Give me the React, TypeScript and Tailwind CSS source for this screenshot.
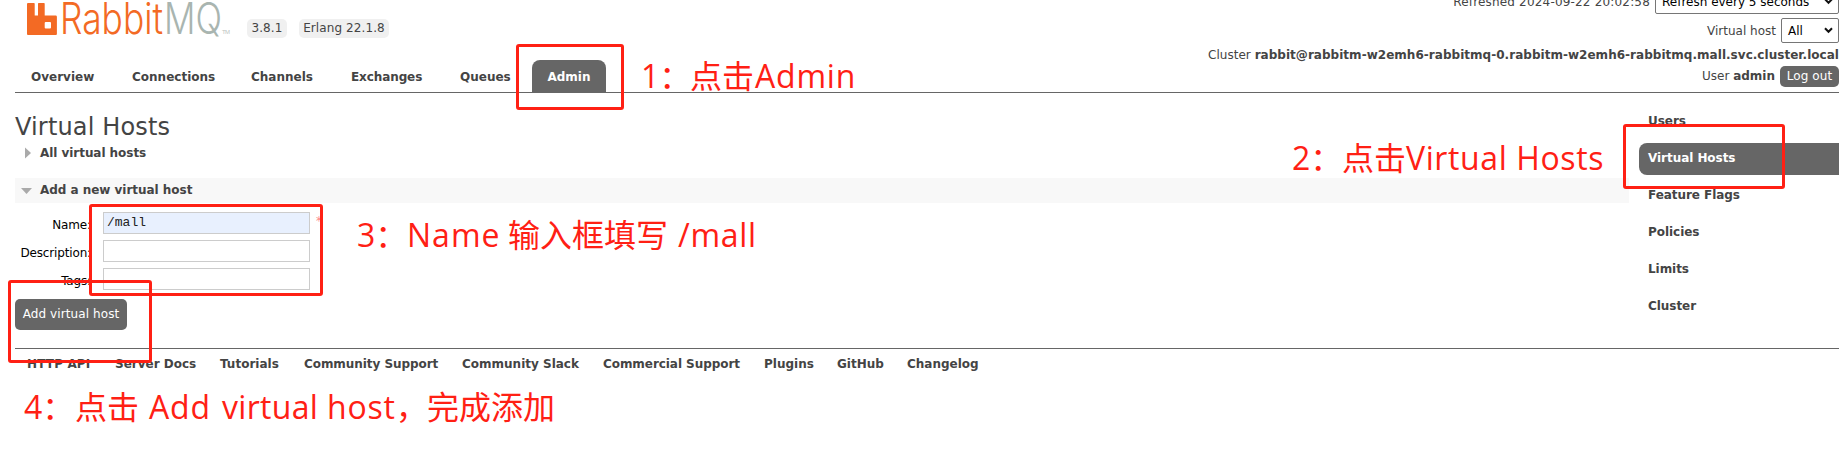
import React from "react";

const tabs = [
  { label: "Overview", cls: "w-[101px]" },
  { label: "Connections", cls: "w-[119px]" },
  { label: "Channels", cls: "w-[100px]" },
  { label: "Exchanges", cls: "w-[109px] tracking-[-0.1px]" },
  { label: "Queues", cls: "w-[72px]" },
];

const links = [
  { label: "HTTP API", cls: "w-[88px] tracking-[0.15px]" },
  { label: "Server Docs", cls: "w-[105px]" },
  { label: "Tutorials", cls: "w-[84px]" },
  { label: "Community Support", cls: "w-[158px] tracking-[-0.06px]" },
  { label: "Community Slack", cls: "w-[141px]" },
  { label: "Commercial Support", cls: "w-[161px] tracking-[-0.06px]" },
  { label: "Plugins", cls: "w-[73px]" },
  { label: "GitHub", cls: "w-[70px]" },
  { label: "Changelog", cls: "w-[90px]" },
];

const sections = ["Users", "Virtual Hosts", "Feature Flags", "Policies", "Limits", "Cluster"];

const Logo = () => (
  <svg width="210" height="40" viewBox="0 0 210 40" className="block overflow-visible">
    <path
      fill="#f36a24"
      d="M1 3h6q.7 0 .7.700v11.800h3.300V3.700q0-.7.700-.700h5.300q.7 0 .7.700v11.800h11q1.200 0 1.200 1.200V34q0 1-1 1H1q-1 0-1-1V4q0-1 1-1zM18.700 22q-1 0-1 1v4.500q0 1 1 1H23q1 0 1-1V23q0-1-1-1z"
    />
    <text x="33" y="34" fontSize="43" fontWeight="300" fill="#f36a24" textLength="103" lengthAdjust="spacingAndGlyphs" className="font-['Inter']">
      Rabbit
    </text>
    <text x="137" y="34" fontSize="43" fontWeight="300" fill="#a9b5b0" textLength="58" lengthAdjust="spacingAndGlyphs" className="font-['Inter']">
      MQ
    </text>
    <text x="195" y="34" fontSize="6" fill="#bcc4c1" textLength="8" className="font-['Liberation_Sans']">
      TM
    </text>
  </svg>
);

const Chevron = () => (
  <svg width="9" height="7" viewBox="0 0 9 7" className="shrink-0">
    <path d="M1 1.200l3.500 3.600L8 1.200" fill="none" stroke="#111" strokeWidth="2" />
  </svg>
);

const Field = ({ label, value = "" }: { label: string; value?: string }) => (
  <div className="flex h-[28px] items-start">
    <label className="mt-[3px] w-[76px] text-right leading-[20px] tracking-[-0.15px] text-black">{label}</label>
    <div
      className={
        "ml-[12px] h-[22px] w-[207px] border border-[#ccc] pl-[3px] font-['Liberation_Mono'] text-[13px] leading-[20px] text-[#222] " +
        (value ? "bg-[#e8f0fe]" : "bg-white")
      }
    >
      {value}
    </div>
    {value && <span className="ml-[6px] mt-[1px] leading-[16px] text-[#f88]">*</span>}
  </div>
);

const Frame = ({ cls }: { cls: string }) => (
  <div className={"absolute rounded-[3px] border-[3px] border-[#ff2014] " + cls} />
);

const note =
  "absolute flex whitespace-pre font-['Open_Sans','Noto_Sans_CJK_SC',sans-serif] text-[32px] leading-[40px] text-[#ff2014]";

export default function App() {
  return (
    <div className="relative h-[473px] w-[1848px] overflow-hidden bg-white pl-[15px] pr-[9px] font-['DejaVu_Sans',sans-serif] text-[12px] text-[#444]">
      <header className="flex h-[93px] justify-between border-b border-[#666]">
        <div>
          <div className="flex h-[60px] pl-[12px]">
            <Logo />
            <div className="ml-[10px] mt-[19px] h-[19px] w-[40px] rounded-[5px] bg-[#f0f0f0] text-center leading-[19px] tracking-[0.1px]">3.8.1</div>
            <div className="ml-[12px] mt-[19px] h-[19px] w-[90px] whitespace-nowrap rounded-[5px] bg-[#f0f0f0] text-center leading-[19px] tracking-[0.1px]">Erlang 22.1.8</div>
          </div>
          <nav className="flex h-[32px] pl-[16px] font-bold leading-[34px]">
            {tabs.map((t) => (
              <a key={t.label} className={"shrink-0 whitespace-nowrap " + t.cls}>{t.label}</a>
            ))}
            <a className="h-[32px] w-[74px] rounded-t-[8px] bg-[#666] text-center text-white">Admin</a>
          </nav>
        </div>
        <div className="flex flex-col items-end whitespace-nowrap">
          <div className="-mt-[11px] flex h-[25px] items-center gap-[5px]">
            <span className="tracking-[0.18px]">Refreshed 2024-09-22 20:02:58</span>
            <div className="flex h-[25px] w-[184px] items-center justify-between rounded-[2px] border border-[#767676] pl-[6px] pr-[5px] text-black">
              <span>Refresh every 5 seconds</span>
              <Chevron />
            </div>
          </div>
          <div className="mt-[4px] flex h-[25px] items-center gap-[5px]">
            <span>Virtual host</span>
            <div className="flex h-[25px] w-[58px] items-center justify-between rounded-[2px] border border-[#767676] pl-[6px] pr-[5px] text-black">
              <span>All</span>
              <Chevron />
            </div>
          </div>
          <div className="mt-[2px] h-[20px] leading-[20px] tracking-[0.03px]">
            Cluster <b>rabbit@rabbitm-w2emh6-rabbitmq-0.rabbitm-w2emh6-rabbitmq.mall.svc.cluster.local</b>
          </div>
          <div className="mt-px flex h-[21px] leading-[21px]">
            <span className="mr-[5px]">
              User <b>admin</b>
            </span>
            <button className="h-[21px] w-[59px] rounded-[5px] bg-[#666] text-white tracking-[0.1px]">Log out</button>
          </div>
        </div>
      </header>

      <div className="flex h-[255px] justify-between">
        <main className="w-[1614px]">
          <h1 className="mt-[17px] h-[33px] text-[24px] leading-[35px] tracking-[0.15px]">Virtual Hosts</h1>
          <h2 className="flex h-[20px] items-center pl-[10px] font-bold leading-[20px] tracking-[-0.05px]">
            <svg width="6" height="12" className="mr-[9px]"><path d="M0 .5L6 6L0 11.500z" fill="#aaa" /></svg>
            All virtual hosts
          </h2>
          <h2 className="mt-[15px] flex h-[25px] items-center bg-[#f8f8f8] pl-[6px] font-bold leading-[25px] tracking-[-0.03px]">
            <svg width="11" height="6" className="mr-[8px]"><path d="M0 0H11L5.500 6z" fill="#aaa" /></svg>
            Add a new virtual host
          </h2>
          <form className="mt-[9px]">
            <Field label="Name:" value="/mall" />
            <Field label="Description:" />
            <Field label="Tags:" />
            <button type="button" className="mt-[3px] block h-[31px] w-[112px] whitespace-nowrap rounded-[5px] bg-[#666] pb-[2px] text-white tracking-[0.1px]">Add virtual host</button>
          </form>
        </main>
        <aside className="w-[200px] pt-[13px] font-bold">
          {sections.map((s) => (
            <a
              key={s}
              className={
                "mb-[5px] block h-[32px] rounded-l-[8px] pl-[9px] leading-[31px] tracking-[-0.05px] " +
                (s === "Virtual Hosts" ? "bg-[#666] text-white" : "")
              }
            >
              {s}
            </a>
          ))}
        </aside>
      </div>

      <footer className="flex border-t border-[#666] pl-[12px] font-bold">
        {links.map((l) => (
          <a key={l.label} className={"mt-[5px] shrink-0 whitespace-nowrap leading-[20px] " + l.cls}>{l.label}</a>
        ))}
      </footer>

      <Frame cls="left-[516px] top-[44px] h-[66px] w-[108px]" />
      <Frame cls="left-[1623px] top-[124px] h-[65px] w-[162px]" />
      <Frame cls="left-[89px] top-[204px] h-[92px] w-[234px]" />
      <Frame cls="left-[8px] top-[280px] h-[83px] w-[144px]" />

      <div className={note + " left-[641px] top-[56px]"}>
        <span className="w-[49px]">1：</span>
        <span className="w-[65px]">点击</span>
        <span className="tracking-[0.8px]">Admin</span>
      </div>
      <div className={note + " left-[1292px] top-[138px]"}>
        <span className="w-[50px]">2：</span>
        <span className="w-[64px]">点击</span>
        <span className="tracking-[0.6px]">Virtual Hosts</span>
      </div>
      <div className={note + " left-[357px] top-[215px]"}>
        <span className="w-[50px]">3：</span>
        <span className="w-[101px] tracking-[1px]">Name</span>
        <span className="w-[170px]">输入框填写</span>
        <span className="tracking-[0.7px]">/mall</span>
      </div>
      <div className={note + " left-[24px] top-[387px]"}>
        <span className="w-[51px]">4：</span>
        <span className="w-[74px]">点击</span>
        <span className="w-[73px] tracking-[0.8px]">Add</span>
        <span className="w-[105px] tracking-[0.3px]">virtual</span>
        <span className="w-[100px] tracking-[0.8px]">host，</span>
        <span>完成添加</span>
      </div>
    </div>
  );
}
